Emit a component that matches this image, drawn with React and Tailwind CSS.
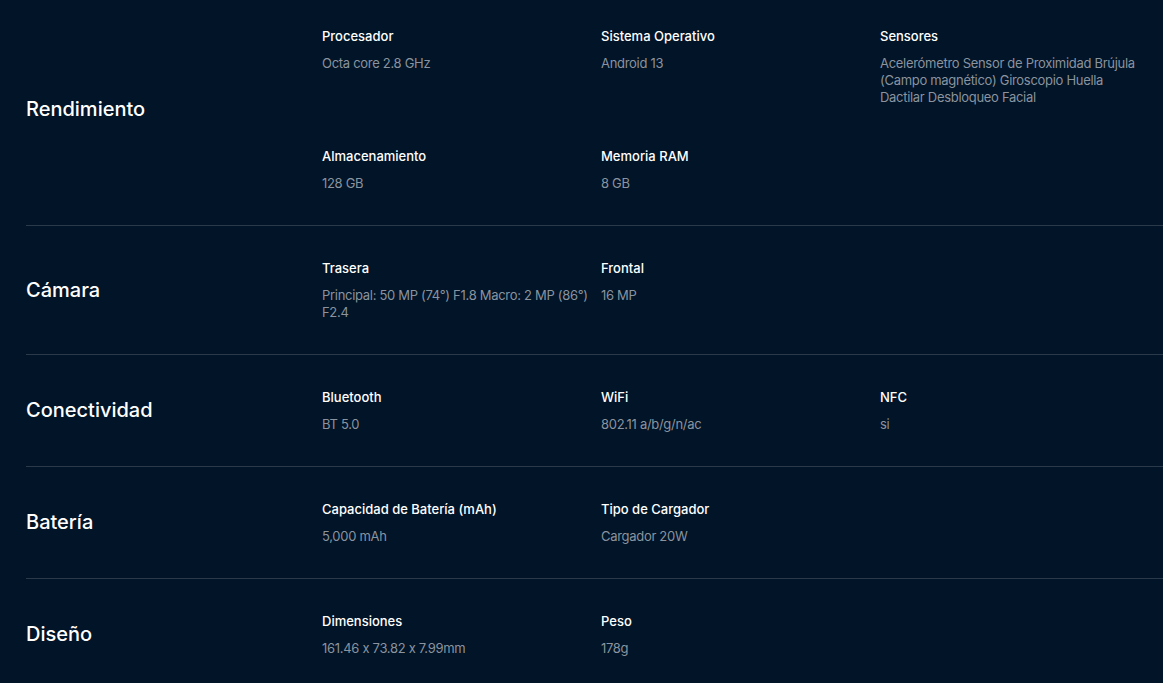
const specs = [
  {
    title: "Rendimiento",
    items: [
      { label: "Procesador", value: "Octa core 2.8 GHz" },
      { label: "Sistema Operativo", value: "Android 13" },
      {
        label: "Sensores",
        value: "Acelerómetro Sensor de Proximidad Brújula (Campo magnético) Giroscopio Huella Dactilar Desbloqueo Facial",
      },
      { label: "Almacenamiento", value: "128 GB" },
      { label: "Memoria RAM", value: "8 GB" },
    ],
  },
  {
    title: "Cámara",
    items: [
      { label: "Trasera", value: "Principal: 50 MP (74°) F1.8 Macro: 2 MP (86°) F2.4" },
      { label: "Frontal", value: "16 MP" },
    ],
  },
  {
    title: "Conectividad",
    items: [
      { label: "Bluetooth", value: "BT 5.0" },
      { label: "WiFi", value: "802.11 a/b/g/n/ac" },
      { label: "NFC", value: "si" },
    ],
  },
  {
    title: "Batería",
    items: [
      { label: "Capacidad de Batería (mAh)", value: "5,000 mAh" },
      { label: "Tipo de Cargador", value: "Cargador 20W" },
    ],
  },
  {
    title: "Diseño",
    items: [
      { label: "Dimensiones", value: "161.46 x 73.82 x 7.99mm" },
      { label: "Peso", value: "178g" },
    ],
  },
];

function SpecSection({ section, first }) {
  return (
    <div
      className={`flex items-center border-[#2b3a4a] ${first ? "pt-[26px] pb-[33px]" : "border-t pt-[32px] pb-[33px]"}`}
    >
      <h3 className="w-[296px] shrink-0 text-[20px] font-medium text-white">{section.title}</h3>
      <div className="grid flex-1 grid-cols-[279px_279px_1fr] gap-y-[40px]">
        {section.items.map((item) => (
          <div key={item.label}>
            <div className="text-[13px] leading-[20px] font-medium text-white">{item.label}</div>
            <div className="mt-[9px] max-w-[268px] text-[13px] leading-[17px] tracking-[-0.3px] text-[#8a939e]">
              {item.value}
            </div>
          </div>
        ))}
      </div>
    </div>
  );
}

export default function App() {
  return (
    <div
      className="min-h-[683px] w-full bg-[#011428] pl-[26px] [font-feature-settings:'calt'_0]"
      style={{ fontFamily: "Inter, 'Open Sans', sans-serif" }}
    >
      {specs.map((section, i) => (
        <SpecSection key={section.title} section={section} first={i === 0} />
      ))}
    </div>
  );
}
